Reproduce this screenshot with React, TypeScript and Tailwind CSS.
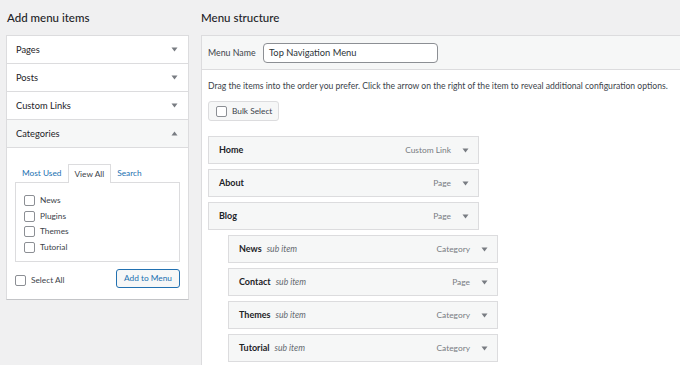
import React from "react";

const font = { fontFamily: 'Lato, "Open Sans", sans-serif' };

function Caret({ up = false }: { up?: boolean }) {
  return (
    <svg width="7" height="5" viewBox="0 0 7 5" className="shrink-0">
      {up ? <path d="M0.5 4.5 L3.5 0.5 L6.5 4.5 Z" fill="#787c82" /> : <path d="M0.5 0.5 L6.5 0.5 L3.5 4.5 Z" fill="#787c82" />}
    </svg>
  );
}

function Box() {
  return <span className="inline-block w-[11px] h-[11px] rounded-[2px] border border-[#8c8f94] bg-white shrink-0" />;
}

type Item = { title: string; type: string; sub?: boolean };

const items: Item[] = [
  { title: "Home", type: "Custom Link" },
  { title: "About", type: "Page" },
  { title: "Blog", type: "Page" },
  { title: "News", type: "Category", sub: true },
  { title: "Contact", type: "Page", sub: true },
  { title: "Themes", type: "Category", sub: true },
  { title: "Tutorial", type: "Category", sub: true },
];

function MenuItem({ item }: { item: Item }) {
  return (
    <div
      className={
        "h-[28px] flex items-center border border-[#dcdcde] bg-[#f6f7f7] pl-[10px] pr-[9px] " +
        (item.sub ? "ml-[20px] w-[270px]" : "w-[271px]")
      }
    >
      <span className="text-[9px] font-bold text-[#1d2327]">{item.title}</span>
      {item.sub && <span className="ml-[5px] text-[8.6px] italic text-[#646970]">sub item</span>}
      <span className="ml-auto text-[8.4px] text-[#787c82]">{item.type}</span>
      <span className="ml-[11px]"><Caret /></span>
    </div>
  );
}

export default function App() {
  return (
    <div className="w-[680px] h-[365px] overflow-hidden bg-[#f0f0f1] flex" style={font}>
      {/* left column */}
      <div className="w-[201px] shrink-0 pl-[6px] pr-[12px]">
        <div className="h-[35px] flex items-center pl-[1px] text-[11.5px] font-medium text-[#1d2327]">Add menu items</div>
        <div className="bg-white border border-[#dcdcde] border-b-[#c3c4c7]">
          {["Pages", "Posts", "Custom Links"].map((t) => (
            <div key={t} className="h-[28px] flex items-center justify-between pl-[9px] pr-[10px] border-b border-[#dcdcde] text-[9.3px] text-[#1d2327]">
              <span>{t}</span>
              <Caret />
            </div>
          ))}
          <div className="h-[28px] flex items-center justify-between pl-[9px] pr-[10px] border-b border-[#dcdcde] bg-[#f6f7f7] text-[9.3px] text-[#1d2327]">
            <span>Categories</span>
            <Caret up />
          </div>
          <div className="px-[8px] pt-[15px] pb-[11px]">
            <div className="flex items-end h-[19px] pl-[7px] text-[8.3px]">
              <span className="text-[#2271b1] pb-[3px] pr-[6px]">Most Used</span>
              <span className="h-[19px] px-[6px] flex items-center bg-white border border-b-0 border-[#dcdcde] text-[#3c434a] relative top-[1px]">View All</span>
              <span className="text-[#2271b1] pb-[3px] pl-[6px]">Search</span>
            </div>
            <div className="h-[80px] border border-[#dcdcde] pt-[12px] pl-[8px] flex flex-col gap-[4.5px]">
              {["News", "Plugins", "Themes", "Tutorial"].map((c) => (
                <div key={c} className="flex items-center gap-[5px] text-[8.3px] text-[#3c434a] h-[11px]">
                  <Box />
                  <span>{c}</span>
                </div>
              ))}
            </div>
            <div className="flex items-center justify-between mt-[7px]">
              <div className="flex items-center gap-[5px] text-[8.3px] text-[#3c434a] mt-[3px]">
                <Box />
                <span>Select All</span>
              </div>
              <div className="w-[64px] h-[19px] flex items-center justify-center border border-[#2271b1] rounded-[3px] bg-[#f6f7f7] text-[8.3px] text-[#2271b1]">
                Add to Menu
              </div>
            </div>
          </div>
        </div>
      </div>

      {/* right column */}
      <div className="flex-1 min-w-0">
        <div className="h-[35px] flex items-center text-[11.5px] font-medium text-[#1d2327]">Menu structure</div>
        <div className="bg-white border-t border-l border-[#dcdcde] h-[330px]">
          <div className="h-[34px] flex items-center bg-[#f6f7f7] border-b border-[#dcdcde] pl-[6px]">
            <span className="text-[8.8px] text-[#3c434a] w-[55px]">Menu Name</span>
            <div className="w-[175px] h-[20px] flex items-center pl-[5px] bg-white border border-[#8c8f94] rounded-[4px] text-[9.3px] text-[#2c3338]">
              Top Navigation Menu
            </div>
          </div>
          <div className="pl-[6px] pt-[10px]">
            <p className="text-[8.6px] text-[#3c434a] leading-[12px] whitespace-nowrap">
              Drag the items into the order you prefer. Click the arrow on the right of the item to reveal additional configuration options.
            </p>
            <div className="mt-[9px] w-[71px] h-[20px] flex items-center gap-[5px] pl-[7px] bg-[#f6f7f7] border border-[#dcdcde] rounded-[3px] text-[8.3px] text-[#3c434a]">
              <Box />
              <span>Bulk Select</span>
            </div>
            <div className="mt-[15px] flex flex-col gap-[5px]">
              {items.map((it) => (
                <MenuItem key={it.title} item={it} />
              ))}
            </div>
          </div>
        </div>
      </div>
    </div>
  );
}
